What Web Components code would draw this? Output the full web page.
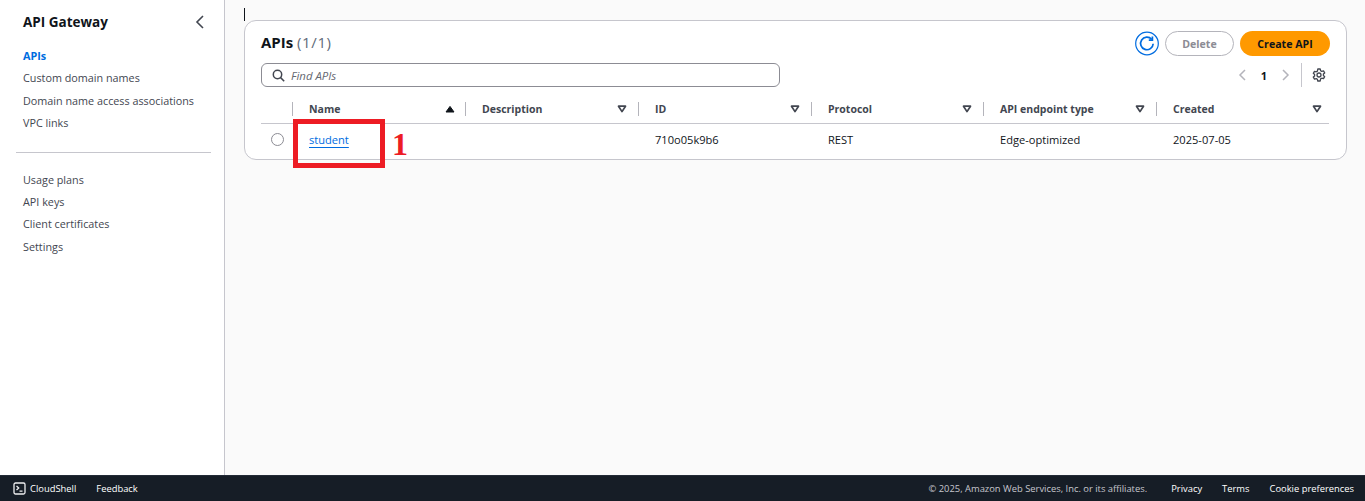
<!DOCTYPE html>
<html lang="en">
<head>
<meta charset="utf-8">
<title>API Gateway</title>
<style>
    html, body { margin: 0; height: 100%; }
    body { font-family: "Open Sans", "Noto Sans", sans-serif; color: #0f141a; overflow: hidden; }
    #app { display: flex; flex-direction: column; height: 501px; }
    #content { display: flex; flex: 1; min-height: 0; }
</style>
</head>
<body>
<div id="app">
    <div id="content">
        <side-nav></side-nav>
        <main-area>
            <apis-card></apis-card>
        </main-area>
    </div>
    <page-footer></page-footer>
</div>
<script>
class SideNav extends HTMLElement {
    connectedCallback() {
        this.attachShadow({ mode: 'open' });
        this.shadowRoot.innerHTML = `
            <style>
                :host {
                    display: block;
                    width: 224px;
                    flex: none;
                    background: #fff;
                    border-right: 1px solid #c6c6cd;
                    font-size: 10.8px;
                    color: #424650;
                }
                .head {
                    display: flex;
                    justify-content: space-between;
                    align-items: center;
                    height: 20px;
                    padding: 12px 16px 0 23px;
                    margin-bottom: 13px;
                }
                h2 { margin: 0; font-size: 13.5px; font-weight: 700; color: #0f141a; }
                svg { display: block; }
                ul { list-style: none; margin: 0; padding: 0 0 0 23px; }
                li { height: 22.4px; line-height: 22.4px; white-space: nowrap; }
                .active { color: #006ce0; font-weight: 700; }
                hr { border: 0; border-top: 1px solid #c6c6cd; margin: 17px 13px 16px 16px; }
            </style>
            <div class="head">
                <h2>API Gateway</h2>
                <svg width="16" height="16" viewBox="0 0 16 16" fill="none" stroke="#424650" stroke-width="1.6"><path d="M11 2 5 8l6 6"/></svg>
            </div>
            <ul>
                <li class="active">APIs</li>
                <li>Custom domain names</li>
                <li>Domain name access associations</li>
                <li>VPC links</li>
            </ul>
            <hr>
            <ul>
                <li>Usage plans</li>
                <li>API keys</li>
                <li>Client certificates</li>
                <li>Settings</li>
            </ul>
        `;
    }
}

class MainArea extends HTMLElement {
    connectedCallback() {
        this.attachShadow({ mode: 'open' });
        this.shadowRoot.innerHTML = `
            <style>
                :host {
                    display: block;
                    flex: 1;
                    position: relative;
                    background: #fafafa;
                    padding: 20px 18px 0 19px;
                }
                .caret { position: absolute; left: 19px; top: 8px; width: 1px; height: 13px; background: #0f141a; }
            </style>
            <div class="caret"></div>
            <slot></slot>
        `;
    }
}

class ApisCard extends HTMLElement {
    connectedCallback() {
        const caret = `<svg width="10" height="10" viewBox="0 0 10 10" fill="none" stroke="#424650" stroke-width="1.7" stroke-linejoin="round"><path d="M1.5 2.2h7L5 7.6z"/></svg>`;
        const th = (label, cls = '') => `<div class="th ${cls}"><span>${label}</span>${caret}</div>`;
        this.attachShadow({ mode: 'open' });
        this.shadowRoot.innerHTML = `
            <style>
                :host {
                    display: block;
                    position: relative;
                    box-sizing: border-box;
                    height: 140px;
                    background: #fff;
                    border: 1px solid #c6c6cd;
                    border-radius: 12px;
                    padding: 10px 16px 0;
                    font-size: 11.1px;
                }
                svg { display: block; flex: none; }
                .top { display: flex; justify-content: space-between; align-items: center; height: 25px; }
                h1 { margin: -4px 0 0; font-size: 15px; font-weight: 700; color: #0f141a; }
                h1 span { font-weight: 400; color: #5f6b7a; letter-spacing: .6px; }
                .actions { display: flex; align-items: center; gap: 6px; }
                .delete, .create {
                    box-sizing: border-box;
                    height: 25px;
                    border-radius: 13px;
                    font: 700 10.6px "Open Sans", "Noto Sans", sans-serif;
                    display: flex;
                    align-items: center;
                    justify-content: center;
                }
                .delete { width: 69px; color: #8c8c94; background: #fff; border: 1px solid #b4b4bb; }
                .create { width: 90px; color: #0f141a; background: #ff9900; border: 0; }
                .tools { display: flex; justify-content: space-between; align-items: center; height: 24px; margin-top: 7px; }
                .search {
                    box-sizing: border-box;
                    width: 519px;
                    height: 24px;
                    display: flex;
                    align-items: center;
                    gap: 6px;
                    padding-left: 10px;
                    border: 1px solid #8c8c94;
                    border-radius: 6px;
                    font-style: italic;
                    font-size: 11.4px;
                    color: #656871;
                }
                .pager { display: flex; align-items: center; }
                .pager b { width: 30px; text-align: center; font-size: 11px; color: #0f141a; }
                .pager i { display: block; width: 1px; height: 24px; background: #c6c6cd; margin: 0 10px 0 10px; }
                .table { display: grid; grid-template-columns: 31px 173px 173px 173px 172px 173px 173px; margin-top: 9px; }
                .th {
                    box-sizing: border-box;
                    height: 28px;
                    display: flex;
                    justify-content: space-between;
                    align-items: center;
                    padding: 0 11px 2px 17px;
                    font-size: 10.5px;
                    font-weight: 700;
                    color: #424650;
                    border-bottom: 1px solid #c6c6cd;
                    position: relative;
                }
                .th.last { padding-right: 7px; }
                .th::before { content: ""; position: absolute; left: 0; top: 6px; height: 14px; width: 1px; background: #b4b4bb; }
                .th.first::before { display: none; }
                .td { height: 33px; display: flex; align-items: center; padding-left: 17px; color: #0f141a; padding-bottom: 3px; box-sizing: border-box; }
                .radio { padding-left: 10px; padding-bottom: 2px; }
                .radio span { width: 11px; height: 11px; border: 1px solid #8c8c94; border-radius: 50%; background: #fff; }
                a { color: #006ce0; text-decoration: underline; text-underline-offset: 3px; }
                .mark { position: absolute; left: 48px; top: 98px; width: 92px; height: 49px; box-sizing: border-box; border: 5px solid #ed1c24; }
                .num { position: absolute; left: 147px; top: 103px; font: 700 32px/40px "Liberation Serif", serif; color: #ed1c24; }
            </style>
            <div class="top">
                <h1>APIs <span>(1/1)</span></h1>
                <div class="actions">
                    <svg width="24" height="25" viewBox="0 0 24 25" fill="none" stroke="#006ce0"><circle cx="12" cy="12.5" r="11.3" stroke-width="1.2"/><path d="M16.6 8.2a6.3 6.3 0 1 0 1.6 4.6" stroke-width="1.7"/><path d="M17.4 5.6v3.6h-3.6" stroke-width="1.7"/></svg>
                    <div class="delete">Delete</div>
                    <div class="create">Create API</div>
                </div>
            </div>
            <div class="tools">
                <div class="search">
                    <svg width="13" height="13" viewBox="0 0 13 13" fill="none" stroke="#424650" stroke-width="1.5"><circle cx="5.5" cy="5.5" r="4.2"/><path d="m8.6 8.6 3.6 3.6"/></svg>
                    Find APIs
                </div>
                <div class="pager">
                    <svg width="12" height="12" viewBox="0 0 12 12" fill="none" stroke="#b4b4bb" stroke-width="1.5"><path d="M8 1 3 6l5 5"/></svg>
                    <b>1</b>
                    <svg width="12" height="12" viewBox="0 0 12 12" fill="none" stroke="#b4b4bb" stroke-width="1.5"><path d="m4 1 5 5-5 5"/></svg>
                    <i></i>
                    <svg width="14" height="14" viewBox="0 0 14 14" fill="none" stroke="#424650" stroke-width="1.3" stroke-linejoin="round" style="margin-right:4px"><path d="M5.8 1h2.4l.4 1.7 1.2.7 1.7-.5 1.2 2-1.3 1.2v1.4l1.3 1.2-1.2 2-1.7-.5-1.2.7L8.2 13H5.8l-.4-1.7-1.2-.7-1.7.5-1.2-2 1.3-1.2V6.5L1.3 5.3l1.2-2 1.7.5 1.2-.7z"/><circle cx="7" cy="7" r="2"/></svg>
                </div>
            </div>
            <div class="table">
                <div class="th first"></div>
                <div class="th"><span>Name</span><svg width="10" height="10" viewBox="0 0 10 10" fill="#0f141a" stroke="#0f141a" stroke-linejoin="round" style="margin-right:-1px"><path d="M1 8h8L5 2.4z"/></svg></div>
                ${th('Description')}
                ${th('ID')}
                ${th('Protocol')}
                ${th('API endpoint type')}
                ${th('Created', 'last')}
                <div class="td radio"><span></span></div>
                <div class="td"><a>student</a></div>
                <div class="td"></div>
                <div class="td">710o05k9b6</div>
                <div class="td">REST</div>
                <div class="td">Edge-optimized</div>
                <div class="td">2025-07-05</div>
            </div>
            <div class="mark"></div>
            <div class="num">1</div>
        `;
    }
}

class PageFooter extends HTMLElement {
    connectedCallback() {
        this.attachShadow({ mode: 'open' });
        this.shadowRoot.innerHTML = `
            <style>
                :host {
                    display: flex;
                    box-sizing: border-box;
                    height: 26px;
                    flex: none;
                    align-items: center;
                    justify-content: space-between;
                    background: #161d26;
                    border-top: 1px solid #232b37;
                    color: #fff;
                    font-size: 9.4px;
                    padding: 0 11px 0 13px;
                }
                div { display: flex; align-items: center; }
                svg { display: block; margin-right: 4px; }
                .feedback { margin-left: 20px; }
                .copy { color: #c6c6cd; margin-right: 24px; }
                .terms { margin: 0 20px; }
            </style>
            <div>
                <svg width="13" height="13" viewBox="0 0 13 13" fill="none" stroke="#eeeef0" stroke-width="1.3"><rect x="1" y="1" width="11" height="11" rx="1.5"/><path d="m3.5 4 2.2 2-2.2 2M6.5 9.2h3"/></svg>
                CloudShell
                <span class="feedback">Feedback</span>
            </div>
            <div>
                <span class="copy">© 2025, Amazon Web Services, Inc. or its affiliates.</span>
                <span>Privacy</span>
                <span class="terms">Terms</span>
                <span>Cookie preferences</span>
            </div>
        `;
    }
}

customElements.define('side-nav', SideNav);
customElements.define('main-area', MainArea);
customElements.define('apis-card', ApisCard);
customElements.define('page-footer', PageFooter);
</script>
</body>
</html>
